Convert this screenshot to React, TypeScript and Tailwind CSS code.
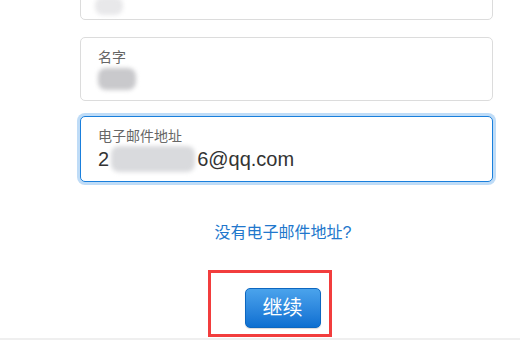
import React from 'react';

const font = { fontFamily: '"Liberation Sans", "Noto Sans CJK SC", sans-serif' };

// blurred-out personal data, kept in the text flow
const Smudge: React.FC<{ className: string }> = ({ className }) => (
  <span className={`inline-block rounded-[8px] align-middle blur-[2px] ${className}`} />
);

const App: React.FC = () => {
  return (
    <div className="relative h-[340px] w-[520px] overflow-hidden bg-white" style={font}>
      <div className="ml-[80px] flex w-[413px] flex-col">
        {/* cut-off field at the top */}
        <div className="-mt-[44px] flex h-[64px] items-end rounded-[5px] border border-[#dcdcdc] bg-white px-[14px] pb-[4px]">
          <Smudge className="h-[18px] w-[28px] bg-[#e8e8ea]" />
        </div>

        <div className="mt-[17px] flex h-[64px] flex-col rounded-[5px] border border-[#dcdcdc] bg-white px-[17px] pt-[10px]">
          <div className="text-[14px] leading-[18px] text-[#666]">名字</div>
          <div className="flex h-[26px] items-center">
            <Smudge className="h-[22px] w-[38px] bg-[#c9c9cc]" />
          </div>
        </div>

        <div className="mt-[15px] flex h-[66px] flex-col rounded-[5px] border border-[#1a7fdc] bg-white px-[17px] pt-[10px] shadow-[0_0_0_3px_#bfdcf7]">
          <div className="text-[14px] leading-[18px] text-[#666]">电子邮件地址</div>
          <div className="flex items-center text-[20px] leading-[28px] text-[#333]">
            <span>2</span>
            <Smudge className="mx-[2px] h-[26px] w-[84px] bg-[#d9dadd]" />
            <span>6@qq.com</span>
          </div>
        </div>

        <div className="mt-[40px] flex justify-center pr-[7px]">
          <button className="text-[16px] leading-[22px] text-[#2277cc]">没有电子邮件地址?</button>
        </div>

        <div className="mt-[44px] flex justify-center pr-[8px]">
          <button className="h-[40px] w-[76px] rounded-[5px] border border-[#0d67c0] bg-gradient-to-b from-[#4aa3ec] to-[#0b6fd1] text-[20px] text-white shadow-[0_1px_1px_rgba(0,0,0,0.15)]">
            继续
          </button>
        </div>
      </div>

      {/* red highlight annotation over the button */}
      <div className="pointer-events-none absolute left-[208px] top-[270px] h-[67px] w-[124px] border-[3px] border-[#f23d3d]" />
      <div className="absolute bottom-0 left-0 h-[2px] w-full bg-[#efefef]" />
    </div>
  );
};

export default App;
